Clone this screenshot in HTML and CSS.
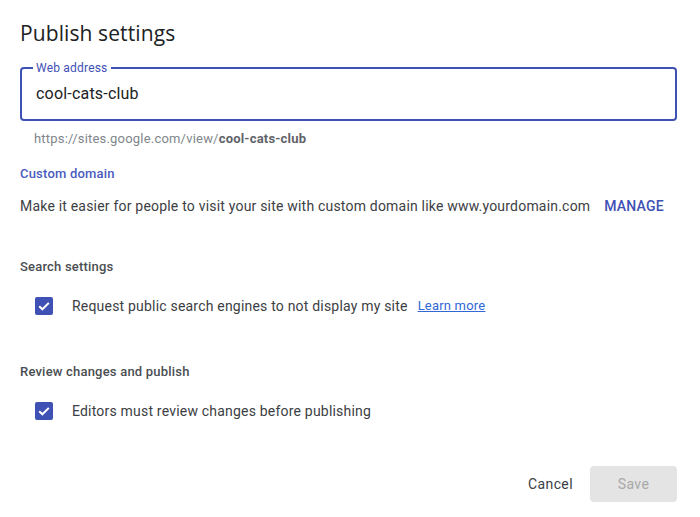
FILE: index.html
```html
<!DOCTYPE html>
<html lang="en">
<head>
<meta charset="utf-8">
<title>Publish settings</title>
<link rel="stylesheet" href="styles.css">
</head>
<body>
<div class="dialog">
  <h1 class="title">Publish settings</h1>
  <div class="field">
    <span class="field-label">Web address</span>
    <div class="field-value">cool-cats-club</div>
  </div>
  <div class="hint">https://sites.google.com/view/<b>cool-cats-club</b></div>

  <div class="section-link">Custom domain</div>
  <div class="domain-row">
    <span class="body-text">Make it easier for people to visit your site with custom domain like www.yourdomain.com</span>
    <a class="manage">MANAGE</a>
  </div>

  <div class="section-title search-title">Search settings</div>
  <div class="check-row">
    <span class="checkbox"><svg viewBox="0 0 18 18" width="18" height="18"><path d="M4.2 9.2 L7.4 12.3 L13.8 5.9" fill="none" stroke="#fff" stroke-width="2"/></svg></span>
    <span class="body-text">Request public search engines to not display my site</span>
    <a class="learn">Learn more</a>
  </div>

  <div class="section-title review-title">Review changes and publish</div>
  <div class="check-row">
    <span class="checkbox"><svg viewBox="0 0 18 18" width="18" height="18"><path d="M4.2 9.2 L7.4 12.3 L13.8 5.9" fill="none" stroke="#fff" stroke-width="2"/></svg></span>
    <span class="body-text">Editors must review changes before publishing</span>
  </div>

  <div class="actions">
    <button class="btn cancel">Cancel</button>
    <button class="btn save">Save</button>
  </div>
</div>
</body>
</html>
```

FILE: styles.css
```css
* { box-sizing: border-box; }
html, body { margin: 0; padding: 0; background: #fff; }
body { font-family: Roboto, "Liberation Sans", sans-serif; color: #3c4043; letter-spacing: 0.2px; }

.dialog {
  width: 700px;
  padding: 19px 23px 0 20px;
  display: flex;
  flex-direction: column;
}

.title {
  margin: 0;
  font-family: "Open Sans", Roboto, sans-serif;
  font-weight: 400;
  font-size: 21px;
  line-height: 28px;
  letter-spacing: 0.1px;
  color: #202124;
}

.field {
  position: relative;
  margin-top: 20px;
  height: 54px;
  border: 2px solid #3f51b5;
  border-radius: 4px;
  display: flex;
  align-items: center;
  padding-left: 14px;
}
.field-label {
  position: absolute;
  left: 11px;
  top: -8px;
  padding: 0 3px;
  background: #fff;
  font-size: 12px;
  line-height: 14px;
  color: #3f51b5;
}
.field-value {
  font-size: 16px;
  line-height: 20px;
  color: #202124;
}

.hint {
  margin-top: 10px;
  padding-left: 14px;
  font-size: 13px;
  line-height: 16px;
  color: #80868b;
}
.hint b { color: #5f6368; font-weight: 700; }

.section-link {
  margin-top: 19px;
  font-size: 13px;
  line-height: 16px;
  font-weight: 500;
  color: #4a5bbd;
}

.domain-row {
  margin-top: 14px;
  display: flex;
  align-items: center;
  gap: 14px;
}
.body-text {
  font-size: 14px;
  line-height: 20px;
  color: #3c4043;
}
.manage {
  font-size: 14px;
  line-height: 20px;
  font-weight: 500;
  color: #3f51b5;
  letter-spacing: 0.2px;
}

.section-title {
  font-size: 13px;
  line-height: 16px;
  font-weight: 500;
  color: #4a4e52;
}
.search-title { margin-top: 43px; }
.review-title { margin-top: 48px; }

.check-row {
  margin-top: 21px;
  height: 20px;
  display: flex;
  align-items: center;
  padding-left: 15px;
}
.checkbox {
  width: 18px;
  height: 18px;
  border-radius: 2px;
  background: #3f51b5;
  display: flex;
  margin-right: 19px;
}
.learn {
  margin-left: 10px;
  font-size: 13px;
  line-height: 20px;
  color: #3367d6;
  text-decoration: underline;
}

.actions {
  margin-top: 45px;
  display: flex;
  justify-content: flex-end;
  align-items: center;
}
.btn {
  font-family: Roboto, "Liberation Sans", sans-serif;
  font-size: 14px;
  font-weight: 400;
  letter-spacing: 0.4px;
  border: 0;
  height: 36px;
  border-radius: 4px;
  background: transparent;
}
.cancel {
  color: #3c4043;
  padding: 0 8px;
  margin-right: 9px;
}
.save {
  width: 87px;
  background: #e4e4e4;
  color: #a8a8a8;
}
```
